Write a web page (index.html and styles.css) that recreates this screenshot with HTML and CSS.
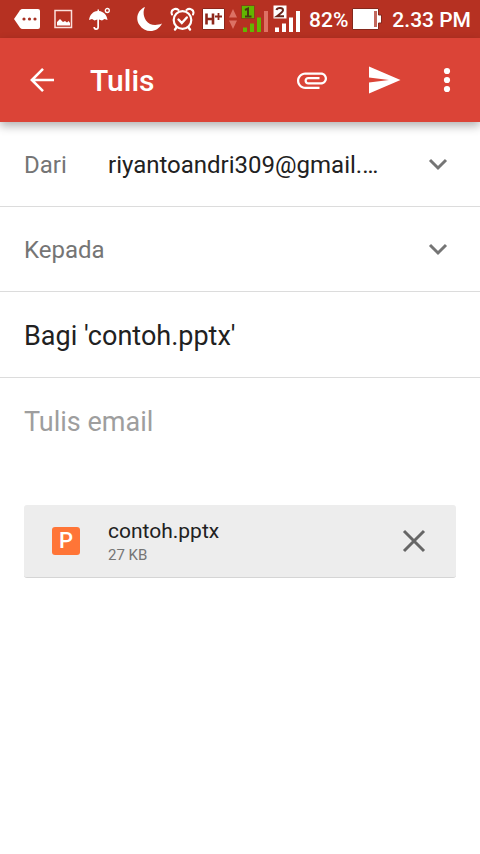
FILE: index.html
```html
<!DOCTYPE html>
<html lang="id">
<head>
<meta charset="utf-8">
<meta name="viewport" content="width=device-width, initial-scale=1">
<title>Tulis</title>
<link rel="stylesheet" href="styles.css">
</head>
<body>
<div class="status">
  <div class="status-notes">
    <svg width="26" height="20" viewBox="0 0 26 20"><path fill="#fff" d="M0 10 6 1.200Q7 0 8.500 0H24Q26 0 26 2V18Q26 20 24 20H8.500Q7 20 6 18.800Z"/><g fill="#a73022"><circle cx="10" cy="10" r="1.600"/><circle cx="15.500" cy="10" r="1.600"/><circle cx="21" cy="10" r="1.600"/></g></svg>
    <svg width="20" height="20" viewBox="0 0 20 20"><path fill="none" stroke="#fbe0dc" stroke-width="1.500" d="M1 1.500H17.500V18.500H1Z"/><path fill="#fff" d="M3 16.500V13L6 10 9 13 11 12 13 13.500 14.500 12 16 14V16.500Z"/></svg>
    <svg width="22" height="24" viewBox="0 0 22 24"><path fill="#fff" d="M1 13C2 7.500 5 4.500 9.500 4V2.500H11V4C15.500 4.500 19 8 19.500 13L16.500 12 14 13.500 11 12.500V20Q11 23 8 23 5.500 23 5.300 20H7Q7.200 21.300 8.200 21.300 9.300 21.300 9.300 20V12.500L6.500 13.500 4 12Z"/><circle cx="19.300" cy="3.500" r="2" fill="none" stroke="#fff" stroke-width="1.300"/></svg>
  </div>
  <div class="status-system">
    <svg width="29" height="26" viewBox="0 0 29 26"><path fill="#fff" d="M8 1C.5 4 -2 13 2.500 19 8 27.500 20.500 27 25 17.500 19 20 12.500 19.500 9 14.500 6 10 6 5 8 1Z"/></svg>
    <svg width="28" height="26" viewBox="0 0 28 26" fill="none" stroke="#fff" stroke-linecap="round"><circle cx="12.500" cy="14" r="8.800" stroke-width="2.200"/><path stroke-width="2.400" d="m8.500 13.500 3.300 3.500 5-5.500M6.500 21.500 5 23.500M18.500 21.500l1.500 2"/><path stroke-width="2" d="M2 8.500Q.5 5 3.500 3.500 6 2 8.500 4M23 8.500Q24.500 5 21.500 3.500 19 2 16.500 4"/></svg>
    <svg width="23" height="24" viewBox="0 0 23 24"><path fill="#fff" stroke="#8d271b" d="M.5 1.500H22.500V22.500H.5Z"/><path fill="none" stroke="#8d271b" stroke-width="2.600" d="M4.500 6.500V17.500M11 6.500V17.500M4.500 12H11"/><path fill="none" stroke="#8d271b" stroke-width="1.800" d="M13 9.500H20M16.500 6V13"/></svg>
    <svg width="8" height="20" viewBox="0 0 8 20" fill="#dc7164"><path d="M0 8.500 4 0 8 8.500ZM0 11.500H8L4 20Z"/></svg>
    <svg width="28" height="28" viewBox="0 0 28 28"><g fill="#62b600"><path stroke="#83301a" stroke-width=".7" d="M.5.500H13.500V13.500H.5Z"/><path d="M2 22.500H6V27H2ZM9 18.500H13V27H9ZM16 12.500H20V27H16Z"/><path fill="#df7164" d="M23 6H27V27H23Z"/></g><path fill="none" stroke="#4a3812" stroke-width="2" d="M4 5 7 3.500V12M4 11.500H10.500"/></svg>
    <svg width="28" height="28" viewBox="0 0 28 28"><path fill="#fff" d="M.5.500H13.500V13.500H.5ZM2 22.500H6V27H2ZM9 18.500H13V27H9ZM16 12.500H20V27H16ZM23 6H27V27H23Z"/><path fill="none" stroke="#68251b" stroke-width="2" d="M3.500 5Q4 3 7 3 10 3 10 5.300 10 7 4 11.200H11"/></svg>
    <span class="status-text battery-level">82%</span>
    <svg width="30" height="22" viewBox="0 0 30 22"><path fill="#fff" stroke="#84281c" d="M.5.500H26.500V7H29.500V15H26.500V21.500H.5Z"/><path fill="#c2685d" d="M22 3H25V19H22Z"/></svg>
    <span class="status-text clock">2.33 PM</span>
  </div>
</div>
<header class="toolbar">
  <button class="tool" type="button" aria-label="Kembali"><svg width="48" height="48" viewBox="0 0 48 48"><path fill="none" stroke="#fff" stroke-width="2.600" d="M36 24H14M25 12.900 13.900 24 25 35.100"/></svg></button>
  <h1 class="title">Tulis</h1>
  <button class="tool" type="button" aria-label="Lampirkan"><svg width="36" height="36" viewBox="0 0 24 24"><path fill="#fff" d="M2 12.500C2 9.460 4.460 7 7.500 7H18c2.210 0 4 1.790 4 4s-1.790 4-4 4H9.500C8.120 15 7 13.880 7 12.500S8.120 10 9.500 10H17v1.500H9.500c-.55 0-1 .45-1 1s.45 1 1 1H18c1.380 0 2.500-1.120 2.500-2.500S19.380 8.500 18 8.500H7.500c-2.210 0-4 1.790-4 4s1.790 4 4 4H17V18H7.500C4.460 18 2 15.540 2 12.500z"/></svg></button>
  <button class="tool" type="button" aria-label="Kirim"><svg width="36" height="36" viewBox="0 0 36 36"><path fill="#fff" d="M3 4.500 34.500 18 3 31.500V20.500L23 18 3 15.500Z"/></svg></button>
  <button class="tool tool-more" type="button" aria-label="Opsi lainnya"><svg width="36" height="36" viewBox="0 0 36 36" fill="#fff"><circle cx="18" cy="9" r="3.100"/><circle cx="18" cy="18" r="3.100"/><circle cx="18" cy="27" r="3.100"/></svg></button>
</header>
<form class="compose">
  <div class="row">
    <label class="row-label" for="from">Dari</label>
    <select class="field" id="from"><option>riyantoandri309@gmail.com</option></select>
    <svg class="chevron" width="36" height="36" viewBox="0 0 36 36"><path d="m10 14 8 8 8-8"/></svg>
  </div>
  <div class="row">
    <label class="row-label" for="to">Kepada</label>
    <input class="field" id="to" type="email">
    <button class="expand" type="button" aria-label="Tambahkan Cc/Bcc"><svg class="chevron" width="36" height="36" viewBox="0 0 36 36"><path d="m10 14 8 8 8-8"/></svg></button>
  </div>
  <div class="row row-subject">
    <input class="field large" type="text" aria-label="Subjek" value="Bagi 'contoh.pptx'">
  </div>
  <textarea class="field large message" rows="2" aria-label="Tulis email" placeholder="Tulis email"></textarea>
  <div class="attachment">
    <span class="file-icon">P</span>
    <div class="file">
      <div class="file-name">contoh.pptx</div>
      <div class="file-size">27 KB</div>
    </div>
    <button class="remove" type="button" aria-label="Hapus lampiran"><svg width="36" height="36" viewBox="0 0 36 36"><path fill="none" stroke="#666" stroke-width="3" d="m8 8 20 20M28 8 8 28"/></svg></button>
  </div>
</form>
</body>
</html>
```
FILE: styles.css
```css
* { box-sizing: border-box; }
body {
  margin: 0;
  background: #fff;
  color: #212121;
  font-family: Roboto, "Liberation Sans", sans-serif;
}
svg { display: block; flex: none; }
button {
  padding: 0;
  border: 0;
  background: none;
  flex: none;
}
.status {
  display: flex;
  align-items: center;
  justify-content: space-between;
  height: 38px;
  padding: 0 9px 0 14px;
  background: #b63122;
}
.status-notes { display: flex; align-items: center; gap: 14px; }
.status-system { display: flex; align-items: center; gap: 4px; }
.status-text {
  padding-top: 2px;
  color: #fff;
  font-size: 21px;
  line-height: 24px;
  font-weight: 500;
  white-space: nowrap;
}
.battery-level { margin-left: 4px; }
.clock { margin-left: 6px; }
.toolbar {
  position: relative;
  display: flex;
  align-items: center;
  height: 84px;
  padding: 0 15px 0 18px;
  background: #db4437;
  box-shadow: 0 4px 9px rgba(0, 0, 0, .3);
}
.title {
  flex: 1;
  margin: 0 0 0 24px;
  padding-top: 2px;
  color: #fff;
  font-size: 30px;
  line-height: 36px;
  font-weight: 500;
}
.tool + .tool { margin-left: 36px; }
.tool + .tool-more { margin-left: 27px; }
.row {
  display: flex;
  align-items: center;
  height: 85px;
  padding: 0 24px;
  border-bottom: 1px solid #dcdcdc;
}
.row-subject { height: 86px; }
.row-label {
  width: 84px;
  flex: none;
  padding-top: 2px;
  color: #757575;
  font-size: 24px;
  line-height: 32px;
}
.field {
  flex: 1;
  min-width: 0;
  margin: 0;
  padding: 2px 0 0;
  border: 0;
  outline: 0;
  background: none;
  color: #212121;
  font-family: inherit;
  font-size: 24px;
  line-height: 32px;
  appearance: none;
  text-overflow: ellipsis;
  white-space: nowrap;
  overflow: hidden;
}
.large { font-size: 27px; }
.chevron { fill: none; stroke: #757575; stroke-width: 3; }
.row > .chevron, .expand { margin-left: 36px; }
.message {
  display: block;
  width: 100%;
  height: 127px;
  padding: 28px 24px;
  resize: none;
  white-space: pre-wrap;
}
.message::placeholder { color: #9e9e9e; opacity: 1; }
.attachment {
  display: flex;
  align-items: center;
  height: 73px;
  margin: 0 24px;
  padding: 0 24px 0 28px;
  background: #ededed;
  border-bottom: 1px solid #d5d5d5;
  border-radius: 3px;
}
.file-icon {
  width: 28px;
  height: 28px;
  border-radius: 3px;
  background: #ff7537;
  color: #fff;
  font-size: 22px;
  line-height: 28px;
  font-weight: 500;
  text-align: center;
}
.file { flex: 1; margin-left: 28px; padding-top: 2px; }
.file-name { font-size: 21px; line-height: 26px; }
.file-size { color: #757575; font-size: 15px; line-height: 22px; }
```
